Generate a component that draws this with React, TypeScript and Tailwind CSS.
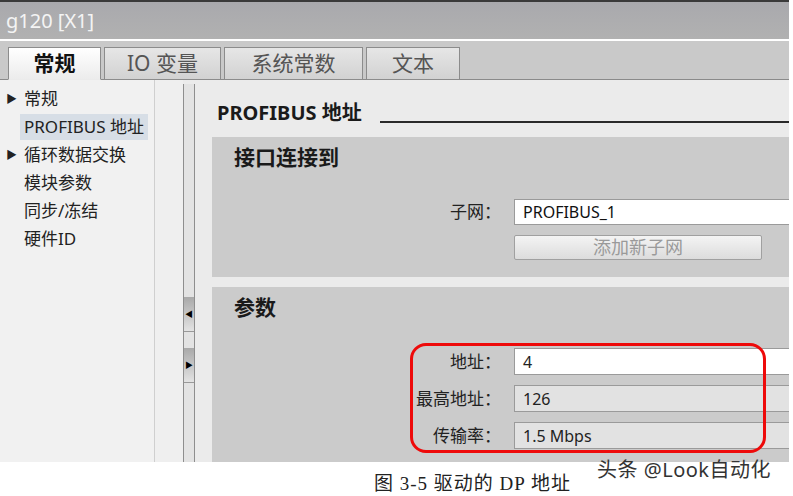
import { ReactNode } from "react"

const cjk = "font-['Noto_Sans','Noto_Sans_CJK_SC',sans-serif]"

const navItems = [
    { label: "常规", arrow: true },
    { label: "PROFIBUS 地址", arrow: false, active: true },
    { label: "循环数据交换", arrow: true },
    { label: "模块参数", arrow: false },
    { label: "同步/冻结", arrow: false },
    { label: "硬件ID", arrow: false },
]

const tabs = [
    { label: "常规", w: "w-[93px]", active: true },
    { label: "IO 变量", w: "w-[117px]" },
    { label: "系统常数", w: "w-[139px]" },
    { label: "文本", w: "w-[94px]" },
]

const Field = ({ label, value, white }: { label: string, value: string, white?: boolean }) => (
    <div className="grid grid-cols-[302px_1fr] items-center h-[27px]">
        <span className="text-right pr-[13px] text-[17px] text-[#222]">{label}：</span>
        <div className={`h-[27px] border border-[#9a9a9a] border-r-0 flex items-center pl-[8px] text-[16px] text-[#222] ${white ? "bg-white" : "bg-[#e2e2e2]"}`}>
            {value}
        </div>
    </div>
)

const Section = ({ title, children, h }: { title: string, children: ReactNode, h: string }) => (
    <div className={`bg-[#cbcbcb] ${h} pt-[7px]`}>
        <div className="pl-[22px] text-[21px] leading-[26px] font-bold text-[#1a1a1a]">{title}</div>
        {children}
    </div>
)

const App = () => {
    return (
        <div className={`relative w-[793px] h-[496px] bg-white overflow-hidden ${cjk}`}>
            <div className="w-[789px]">
                {/* title bar */}
                <div className="h-[39px] border-t-2 border-[#3a3a3a] bg-gradient-to-b from-[#a9a9ad] to-[#b1b1b1] flex items-center pl-[6px] text-[20px] text-[#f4f4f4]">
                    g120 [X1]
                </div>
                <div className="h-[2px] bg-white" />

                {/* tabs */}
                <div className="h-[39px] bg-[#c9c9c9] border-b border-[#8a8a8a] flex items-end pl-[8px] gap-[3px]">
                    {tabs.map(t => (
                        <div
                            key={t.label}
                            className={`${t.w} h-[33px] -mb-px border border-[#8c8c8c] flex items-center justify-center text-[21px] ${t.active ? "bg-gradient-to-b from-white to-[#ececec] border-b-[#ebebeb] font-bold text-[#111]" : "bg-gradient-to-b from-[#e6e6e6] to-[#d2d2d2] text-[#555]"}`}
                        >
                            {t.label}
                        </div>
                    ))}
                </div>

                {/* body */}
                <div className="flex h-[382px] bg-[#ebebeb]">
                    <div className="w-[155px] border-r border-[#cfcfcf] bg-[#f1f1f1] pt-[5px]">
                        {navItems.map(item => (
                            <div key={item.label} className="h-[28px] flex items-center text-[17px] text-[#222]">
                                <span className="w-[20px] pl-[6px] text-[11px]">{item.arrow ? "▶" : ""}</span>
                                <span className={`px-[4px] h-[26px] flex items-center ${item.active ? "bg-[#d7dee6]" : ""}`}>{item.label}</span>
                            </div>
                        ))}
                    </div>
                    <div className="w-[28px] bg-[#efefef]" />
                    <div className="w-[12px] border-x border-[#8e8e8e] bg-[#e3e3e3] flex flex-col mt-[4px]">
                        <div className="h-[213px]" />
                        <div className="h-[35px] bg-gradient-to-b from-[#a9a9a9] to-[#e3e3e3] border-b border-[#999] flex items-center justify-center text-[8px] text-black">◀</div>
                        <div className="h-[16px]" />
                        <div className="h-[35px] bg-gradient-to-b from-[#a9a9a9] to-[#e3e3e3] border-b border-[#999] flex items-center justify-center text-[8px] text-black">▶</div>
                    </div>
                    <div className="flex-1 pl-[17px]">
                        <div className="h-[57px] flex items-start pt-[20px] pl-[5px]">
                            <span className="text-[20px] leading-[26px] font-bold text-[#1a1a1a]">PROFIBUS 地址</span>
                            <div className="flex-1 h-[2px] bg-[#2a2a2a] ml-[18px] mt-[21px]" />
                        </div>

                        <Section title="接口连接到" h="h-[140px]">
                            <div className="mt-[29px] grid grid-cols-[302px_1fr] items-center h-[26px]">
                                <span className="text-right pr-[13px] text-[17px] text-[#222]">子网：</span>
                                <div className="h-[26px] bg-white border border-[#9a9a9a] border-r-0 flex items-center pl-[8px] text-[16px] text-[#111]">PROFIBUS_1</div>
                            </div>
                            <div className="mt-[10px] ml-[302px] w-[248px] h-[25px] rounded-[2px] border border-[#a0a0a0] bg-gradient-to-b from-[#f4f4f4] to-[#dcdcdc] flex items-center justify-center text-[18px] text-[#9a9a9a]">
                                添加新子网
                            </div>
                        </Section>

                        <div className="h-[10px]" />

                        <Section title="参数" h="h-[175px]">
                            <div className="mt-[28px] flex flex-col gap-[10px]">
                                <Field label="地址" value="4" white />
                                <Field label="最高地址" value="126" />
                                <Field label="传输率" value="1.5 Mbps" />
                            </div>
                        </Section>
                    </div>
                </div>

                {/* caption */}
                <div className="h-[34px] flex items-end justify-center pl-[156px]">
                    <span className="font-['Liberation_Serif','Noto_Sans_CJK_SC',serif] text-[19px] leading-[24px] text-[#222] tracking-[1px]">图 3-5 驱动的 DP 地址</span>
                </div>
            </div>

            {/* highlight */}
            <div className="absolute left-[410px] top-[343px] w-[356px] h-[110px] border-[3px] border-[#ee0a0a] rounded-[16px]" />

            {/* watermark */}
            <div className="absolute left-[597px] top-[458px] text-[20px] text-[#333] leading-[24px] tracking-[0.5px]">头条 @Look自动化</div>
        </div>
    )
}

export default App
